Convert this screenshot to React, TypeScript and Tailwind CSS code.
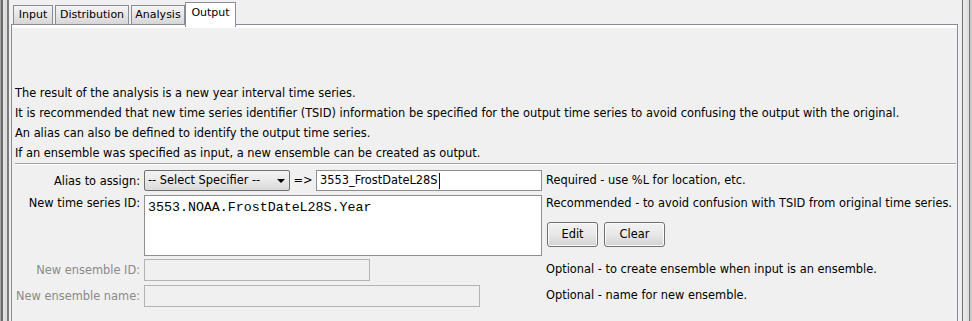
import React from "react";

const tabBase =
  "flex items-center justify-center border-t border-x border-[#898c95] text-black text-[11px]";
const tabIdle =
  tabBase + " h-[19px] bg-gradient-to-b from-[#f4f4f4] via-[#e6e6e6] to-[#d6d6d6]";
const tabActive = tabBase + " relative z-10 h-[25px] -mb-[3px] bg-white pb-[4px]";

const btn =
  "flex items-center justify-center h-[25px] rounded-[3px] border border-[#707070] bg-gradient-to-b from-[#f2f2f2] via-[#e8e8e8] to-[#d2d2d2] text-black shadow-[inset_0_0_0_1px_#fbfbfb]";

function Label({ text, disabled, top }: { text: string; disabled?: boolean; top?: boolean }) {
  return (
    <div
      className={
        "w-[132px] shrink-0 pr-[4px] text-right leading-[14px] whitespace-nowrap " +
        (top ? "pt-[1px] self-start " : "") +
        (disabled ? "text-[#8a8a8a]" : "text-black")
      }
    >
      {text}
    </div>
  );
}

export default function App() {
  return (
    <div className="flex w-[972px] h-[321px] overflow-hidden bg-[#f0f0f0] font-['DejaVu_Sans',sans-serif] text-[11.4px] text-black">
      {/* left window frame */}
      <div className="flex shrink-0 w-[11px] h-full">
        <div className="w-[1px] bg-[#a8a8a8]" />
        <div className="w-[2px] bg-[#6a6a6a]" />
        <div className="w-[4px] bg-gradient-to-r from-[#e4e4e4] to-[#d8d8d8]" />
        <div className="w-[2px] bg-[#7c7c7c]" />
        <div className="w-[2px] bg-[#f0f0f0]" />
      </div>

      {/* tabbed pane */}
      <div className="flex flex-col w-[947px] shrink-0 h-full">
        <div className="flex items-end h-[24px] pl-[2px] gap-[1px]">
          <div className={tabIdle + " w-[40px]"}>Input</div>
          <div className={tabIdle + " w-[74px] ml-[1px]"}>Distribution</div>
          <div className={tabIdle + " w-[54px] ml-[1px]"}>Analysis</div>
          <div className={tabActive + " w-[51px] -ml-[1px]"}>Output</div>
        </div>

        <div className="flex-1 flex flex-col border-t border-x border-[#898c95]">
          <div className="h-[3px] bg-white" />

          <div className="pl-[3px] pt-[55px] leading-[20px] whitespace-nowrap">
            <div>The result of the analysis is a new year interval time series.</div>
            <div>
              It is recommended that new time series identifier (TSID) information be specified for the output time series to avoid confusing the output with the original.
            </div>
            <div>An alias can also be defined to identify the output time series.</div>
            <div>If an ensemble was specified as input, a new ensemble can be created as output.</div>
          </div>

          <div className="ml-[3px] mr-[1px] border-t border-[#a0a0a0] border-b border-b-white" />

          {/* form */}
          <div className="flex flex-col pt-[5px]">
            {/* alias */}
            <div className="flex items-center h-[21px]">
              <Label text="Alias to assign:" />
              <div className="flex items-center w-[398px] shrink-0">
                <div className="flex items-center justify-between w-[146px] h-[21px] rounded-[2px] border border-[#707070] bg-gradient-to-b from-[#f3f3f3] via-[#e9e9e9] to-[#d9d9d9] pl-[3px] pr-[4px] whitespace-nowrap">
                  <span>-- Select Specifier --</span>
                  <svg width="8" height="4" viewBox="0 0 8 4">
                    <path d="M0 0H8L4 4Z" fill="#000" />
                  </svg>
                </div>
                <span className="w-[26px] text-center">=&gt;</span>
                <div className="flex items-center w-[226px] h-[21px] border border-[#8e8f8f] bg-white pl-[3px]">
                  <span>3553_FrostDateL28S</span>
                  <span className="ml-[1px] w-[1px] h-[16px] bg-[#000080]" />
                </div>
              </div>
              <div className="pl-[4px] whitespace-nowrap">Required - use %L for location, etc.</div>
            </div>

            {/* tsid */}
            <div className="flex mt-[4px]">
              <Label text="New time series ID:" top />
              <div className="w-[398px] shrink-0 h-[61px] border border-[#8e8f8f] bg-white pl-[3px] pt-[4px] font-['Liberation_Mono',monospace] text-[13.3px] leading-[16px]">
                3553.NOAA.FrostDateL28S.Year
              </div>
              <div className="flex flex-col pl-[4px]">
                <div className="pt-[1px] leading-[14px] whitespace-nowrap">
                  Recommended - to avoid confusion with TSID from original time series.
                </div>
                <div className="flex gap-[6px] mt-[12px] ml-[1px]">
                  <div className={btn + " w-[51px]"}>Edit</div>
                  <div className={btn + " w-[61px]"}>Clear</div>
                </div>
              </div>
            </div>

            {/* ensemble id */}
            <div className="flex items-center h-[22px] mt-[3px]">
              <Label text="New ensemble ID:" disabled />
              <div className="w-[398px] shrink-0">
                <div className="w-[226px] h-[22px] border border-[#b4b4b4] bg-[#f0f0f0]" />
              </div>
              <div className="pl-[4px] whitespace-nowrap">Optional - to create ensemble when input is an ensemble.</div>
            </div>

            {/* ensemble name */}
            <div className="flex items-center h-[22px] mt-[4px]">
              <Label text="New ensemble name:" disabled />
              <div className="w-[398px] shrink-0">
                <div className="w-[336px] h-[22px] border border-[#b4b4b4] bg-[#f0f0f0]" />
              </div>
              <div className="pl-[4px] whitespace-nowrap">Optional - name for new ensemble.</div>
            </div>
          </div>
        </div>
      </div>

      {/* right window frame */}
      <div className="flex shrink-0 w-[14px] h-full">
        <div className="w-[4px] bg-[#f0f0f0]" />
        <div className="w-[1px] bg-[#6e6e6e]" />
        <div className="w-[6px] bg-gradient-to-r from-[#ececec] to-[#dcdcdc]" />
        <div className="w-[1px] bg-[#7a7a7a]" />
        <div className="w-[2px] bg-[#c8c8c8]" />
      </div>
    </div>
  );
}
